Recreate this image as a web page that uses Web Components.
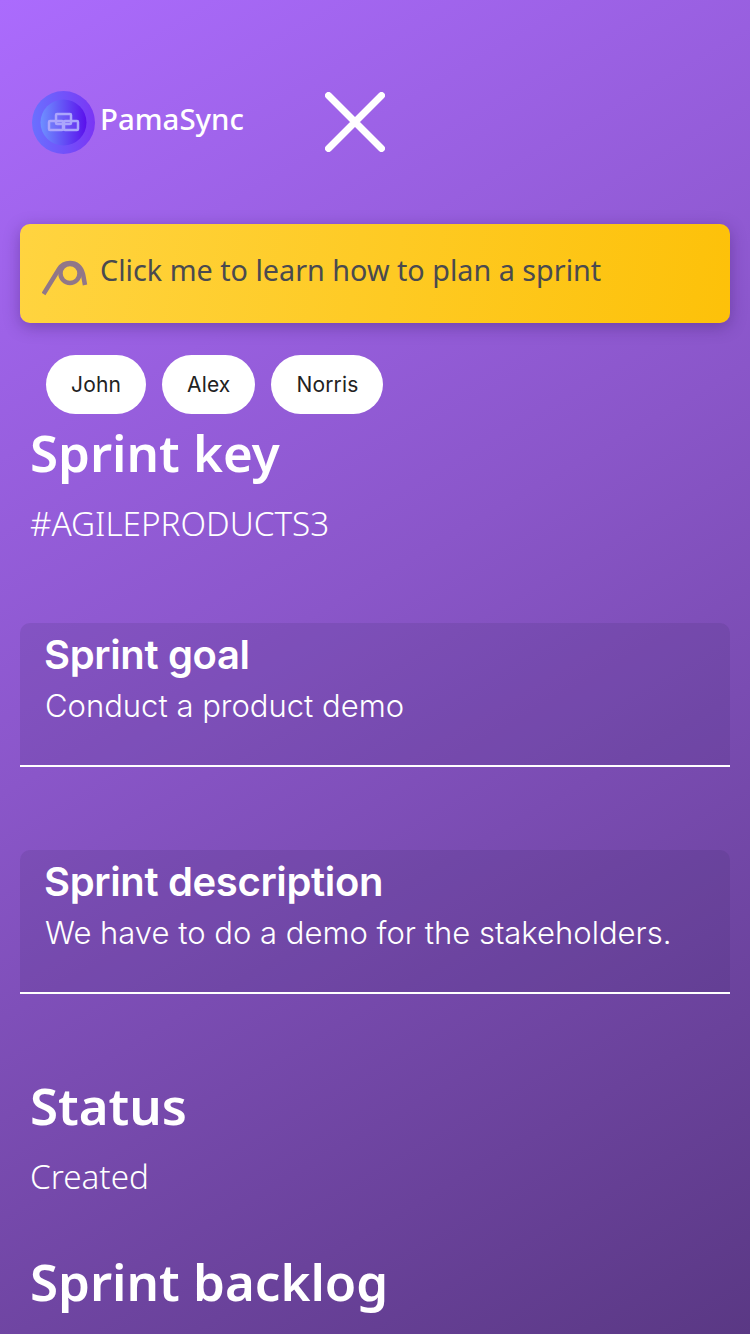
<!DOCTYPE html>
<html>
<head>
<meta charset="utf-8">
<style>
  html, body { margin: 0; height: 100%; }
  body { width: 750px; height: 1334px; overflow: hidden; background: #8a56c9; }
</style>
</head>
<body>
<sprint-page>
  <app-header slot="header"></app-header>
  <help-banner>Click me to learn how to plan a sprint</help-banner>
  <member-chips names="John,Alex,Norris"></member-chips>
  <info-block heading="Sprint key" value="#AGILEPRODUCTS3" style="margin-top:7px"></info-block>
  <field-card heading="Sprint goal" value="Conduct a product demo" style="margin-top:80px"></field-card>
  <field-card heading="Sprint description" value="We have to do a demo for the stakeholders." style="margin-top:83px"></field-card>
  <info-block heading="Status" value="Created" style="margin-top:80px"></info-block>
  <info-block heading="Sprint backlog" style="margin-top:54px"></info-block>
</sprint-page>
<script>
class SprintPage extends HTMLElement {
    constructor() {
        super();
        this.attachShadow({ mode: "open" });
        this.shadowRoot.innerHTML = `
        <style>
          :host {
            display: flex;
            flex-direction: column;
            box-sizing: border-box;
            width: 750px;
            height: 1334px;
            overflow: hidden;
            padding: 91px 20px 0;
            background: linear-gradient(150deg, #ab6bfd 0%, #8a56c9 45%, #5a3884 100%);
            color: #fff;
          }
        </style>
        <slot name="header"></slot>
        <slot></slot>
      `;
    }
}

class AppHeader extends HTMLElement {
    constructor() {
        super();
        this.attachShadow({ mode: "open" });
        this.shadowRoot.innerHTML = `
        <style>
          :host {
            display: flex;
            align-items: flex-start;
            height: 133px;
            padding-left: 12px;
            box-sizing: border-box;
          }
          .logo {
            width: 63px;
            height: 63px;
            flex: none;
            display: block;
          }
          .name {
            margin-left: 5px;
            width: 225px;
            font: 500 29.4px/56px "Noto Sans", sans-serif;
            color: #fff;
          }
          .close {
            width: 60px;
            height: 60px;
            margin-top: 1px;
            display: block;
            flex: none;
          }
        </style>
        <svg class="logo" viewBox="0 0 63 63">
          <defs>
            <linearGradient id="outer" x1="0" y1="0" x2="1" y2="0">
              <stop offset="0" stop-color="#6a70ff"/>
              <stop offset="1" stop-color="#7a35f5"/>
            </linearGradient>
            <linearGradient id="inner" x1="0" y1="0" x2="1" y2="0">
              <stop offset="0" stop-color="#6e90ff"/>
              <stop offset="1" stop-color="#5a10ec"/>
            </linearGradient>
          </defs>
          <circle cx="31.5" cy="31.5" r="31.5" fill="url(#outer)"/>
          <circle cx="31.5" cy="31.5" r="23" fill="url(#inner)"/>
          <g fill="rgba(170,165,252,.14)" stroke="#aca6fc" stroke-width="2.5">
            <rect x="24" y="23" width="15" height="10" rx="1"/>
            <rect x="17" y="30" width="14" height="9" rx="1"/>
            <rect x="32" y="30" width="14" height="9" rx="1"/>
          </g>
        </svg>
        <div class="name">PamaSync</div>
        <svg class="close" viewBox="0 0 60 60">
          <path d="M3.5 3.5L56.5 56.5M56.5 3.5L3.5 56.5" stroke="#fff" stroke-width="7" stroke-linecap="round" fill="none"/>
        </svg>
      `;
    }
}

class HelpBanner extends HTMLElement {
    constructor() {
        super();
        this.attachShadow({ mode: "open" });
        this.shadowRoot.innerHTML = `
        <style>
          :host {
            display: flex;
            align-items: center;
            box-sizing: border-box;
            height: 99px;
            padding: 0 22px;
            border-radius: 10px;
            background: linear-gradient(100deg, #ffd440 0%, #fdc109 100%);
            box-shadow: 0 4px 16px rgba(50, 20, 90, 0.35);
            color: #4a4a4f;
            font: 400 28.75px/40px "Noto Sans", sans-serif;
          }
          svg { width: 46px; height: 46px; flex: none; margin-right: 12px; margin-top: 6px; }
          span { position: relative; top: -4px; }
        </style>
        <svg viewBox="0 0 46 46">
          <path d="M1.5 40L17 15C20 10 24 9 28 9C35 9 39 13 41 20L43 31" fill="none" stroke="#917788" stroke-width="4.5"/>
          <circle cx="28" cy="19.5" r="9.5" fill="none" stroke="#917788" stroke-width="4.5"/>
        </svg>
        <span><slot></slot></span>
      `;
    }
}

class MemberChips extends HTMLElement {
    constructor() {
        super();
        this.attachShadow({ mode: "open" });
    }

    connectedCallback() {
        const names = (this.getAttribute("names") || "").split(",");
        this.shadowRoot.innerHTML = `
        <style>
          :host {
            display: flex;
            gap: 16px;
            margin-top: 32px;
            padding-left: 26px;
          }
          span {
            display: block;
            height: 59px;
            padding: 0 25px;
            border-radius: 30px;
            background: #fff;
            color: #222;
            font: 400 21px/59px Inter, "Noto Sans", sans-serif;
            letter-spacing: 0.15px;
          }
        </style>
        ${names.map((name) => `<span>${name}</span>`).join("")}
      `;
    }
}

class InfoBlock extends HTMLElement {
    constructor() {
        super();
        this.attachShadow({ mode: "open" });
    }

    connectedCallback() {
        const value = this.getAttribute("value");
        this.shadowRoot.innerHTML = `
        <style>
          :host {
            display: block;
            padding-left: 10px;
            font-family: "Noto Sans", sans-serif;
            color: #fff;
          }
          h2 { margin: 0; font-size: 51px; line-height: 62px; font-weight: 600; }
          p { margin: 20px 0 0; font-size: 33.25px; line-height: 40px; font-weight: 300; }
        </style>
        <h2>${this.getAttribute("heading")}</h2>
        ${value ? `<p>${value}</p>` : ""}
      `;
    }
}

class FieldCard extends HTMLElement {
    constructor() {
        super();
        this.attachShadow({ mode: "open" });
    }

    connectedCallback() {
        this.shadowRoot.innerHTML = `
        <style>
          :host {
            display: block;
            box-sizing: border-box;
            height: 144px;
            padding: 8px 24px 0;
            border-radius: 10px 10px 0 0;
            border-bottom: 2px solid #fff;
            background: rgba(60, 40, 100, 0.14);
            font-family: Inter, "Noto Sans", sans-serif;
            color: #fff;
          }
          h3 { margin: 0; font-size: 40px; line-height: 48px; font-weight: 600; letter-spacing: -0.35px; }
          p { margin: 7px 0 0 1px; font-size: 31px; line-height: 40px; font-weight: 300; }
        </style>
        <h3>${this.getAttribute("heading")}</h3>
        <p>${this.getAttribute("value")}</p>
      `;
    }
}

customElements.define("sprint-page", SprintPage);
customElements.define("app-header", AppHeader);
customElements.define("help-banner", HelpBanner);
customElements.define("member-chips", MemberChips);
customElements.define("info-block", InfoBlock);
customElements.define("field-card", FieldCard);
</script>
</body>
</html>
